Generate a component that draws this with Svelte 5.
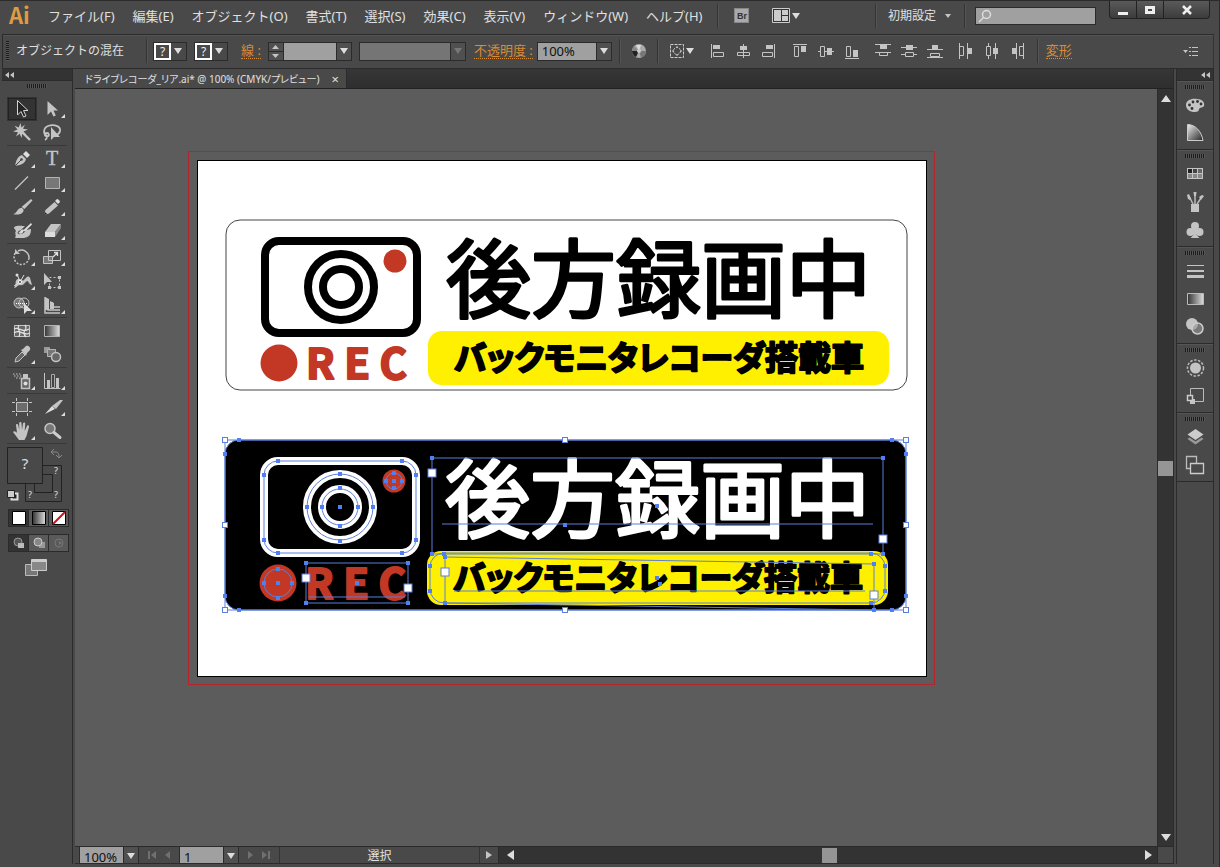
<script lang="ts">
  type Tool = { name: string; icon: string; more?: boolean };

  const menus = [
    'ファイル(F)', '編集(E)', 'オブジェクト(O)', '書式(T)', '選択(S)',
    '効果(C)', '表示(V)', 'ウィンドウ(W)', 'ヘルプ(H)'
  ];

  let activeTool = '選択';
  let strokeWidth = '';
  let brush = '';
  let opacity = '100%';
  let zoom = '100%';
  let page = '1';
  let search = '';

  // 30x24 drawings, grouped the way the panel separates them
  const toolGroups: Tool[][] = [
    [
      { name: '選択', icon: '<path d="M10.5 3.5v14.500l3.500-3.500 2.500 5.500 2.500-1-2.500-5.500h4.500z" fill="#222" stroke="#d4d4d4"/>' },
      { name: 'ダイレクト選択', more: true, icon: '<path d="M10.500 4v14l3.500-3.500 2.500 5 2.300-1-2.300-5h4.500z"/>' },
      { name: '自動選択', icon: '<path d="M13.500 2l1 4.500 3.500-3-2 4.200 5 .8-4.500 2 3 3.500-4.200-1.500-.8 4.500-1.800-4.300-3.700 2.800 2-4.200-5-.8 4.500-2-3-3.700 4.200 1.700z"/><path d="M15 11l8 8" stroke="#c4c4c4" stroke-width="2.400"/>' },
      { name: 'なげなわ', icon: '<path d="M10 15c-4-2-4-8 1-10 6-2 13 0 12 5-.5 2-2 3.500-4 4M10 12c2 0 3 3 0 3.500-3 0-2.500-3.500 0-3.500zM10 15.500c0 2-1 3-2 3.500" fill="none" stroke="#c4c4c4" stroke-width="1.800"/><path d="M14 6v13l3-3h6z"/>' }
    ],
    [
      { name: 'ペン', more: true, icon: '<path d="M8 19c1-5 2-9 7-11l4 4c-1 5-6 6-11 7z"/><path d="M16 7l3-3 4 4-3 3z" fill="#ddd"/><path d="M8 19l6-6" stroke="#444" fill="none"/><circle cx="14.500" cy="12.500" r="1.300" fill="#444"/>' },
      { name: '文字', more: true, icon: '<text x="15" y="18" font-family="Liberation Serif, serif" font-size="20" text-anchor="middle" stroke="#c4c4c4" stroke-width=".4">T</text>' },
      { name: '直線', more: true, icon: '<path d="M8 18.500L21 5.500" stroke="#c4c4c4" stroke-width="1.300"/>' },
      { name: '長方形', more: true, icon: '<path d="M8.500 6.500h14v11h-14z" fill="#777" stroke="#b4b4b4"/>' },
      { name: 'ブラシ', icon: '<path d="M24 4l1.500 1.500-8 8.500-3-2z"/><path d="M6 19c4 0 4-6 8-6 2 0 3.500 2 2 4-2 3-7 3-10 2z"/>' },
      { name: '鉛筆', more: true, icon: '<path d="M7 20l1.500-5 9-8 3.500 3.500-9 8z"/><path d="M18 6l2-2c1.500 0 3 2 3 3l-2 2z" fill="#ddd"/><path d="M7 20l.9-3 2.200 2z" fill="#222"/>' },
      { name: '塗りブラシ', icon: '<path d="M7 8c3-2 9-1 11-1l-4 4c-4 1-5 5 0 4 4-1 5-4 5-4l5-1c0 6-2 8-7 9H8c2-3-1-5 1-7-1-2-2-2-2-4z"/><path d="M24 4l1 1.500-7 7-2-1z" fill="#ddd"/><path d="M17 11c-3-2-4 3-6 3 3 1.500 5 .5 6-3z" fill="#ddd"/>' },
      { name: '消しゴム', more: true, icon: '<path d="M8 13l6-8h10l-6 8z"/><path d="M8 13h10v5H8z" fill="#ddd"/><path d="M18 13l6-8v4l-6 9z" fill="#888"/>' }
    ],
    [
      { name: '回転', more: true, icon: '<path d="M11 6a7.500 7.500 0 0 1 11 7" fill="none" stroke="#c4c4c4" stroke-width="1.500"/><path d="M22 13a7.500 7.500 0 1 1-13-6" fill="none" stroke="#c4c4c4" stroke-width="1.500" stroke-dasharray="2 1.500"/><path d="M8 4v5h5z"/>' },
      { name: '拡大・縮小', more: true, icon: '<path d="M6.500 11.500h9v7h-9z" fill="#777" stroke="#c4c4c4"/><path d="M11.500 5.500h12v10h-12z" fill="none" stroke="#c4c4c4"/><path d="M16 12l4-4M17 7.500h3.500V11" fill="none" stroke="#ddd" stroke-width="1.300"/>' },
      { name: '線幅', more: true, icon: '<path d="M7 19c3-3 0-8 4-9 3-1 3 3 6 1 3-3 4-5 6-2l2 7c-4-1-3-4-5-4-3 2-3 5-7 4-3 0-3 3-6 3z"/><path d="M10 5l3 8 4-7M13 13l-6 4" fill="none" stroke="#ddd"/><circle cx="10" cy="6" r="1.500" fill="#ddd"/><circle cx="13" cy="13" r="1.500" fill="#333" stroke="#fff"/>' },
      { name: '自由変形', icon: '<path d="M7 4v12l3-3h5z"/><path d="M12.500 8.500h10v10h-10z" fill="none" stroke="#c4c4c4" stroke-dasharray="2 2"/><path d="M21 7h3v3h-3zM21 17h3v3h-3zM11 17h3v3h-3z"/>' },
      { name: 'シェイプ形成', more: true, icon: '<circle cx="12" cy="10" r="5" fill="#777" stroke="#c4c4c4"/><circle cx="17" cy="10" r="5" fill="none" stroke="#c4c4c4"/><path d="M9 10.500h11" stroke="#fff" stroke-dasharray="1 1"/><path d="M17 10v11l3-3h5z" fill="#ddd"/>' },
      { name: '遠近グリッド', more: true, icon: '<path d="M8 4v16h15M11 6v11h12M15 9v5h8" fill="none" stroke="#c4c4c4" stroke-width="1.500"/><path d="M8 4l4 2v11H8zM13 8l4 2v6h-4z"/>' }
    ],
    [
      { name: 'メッシュ', icon: '<path d="M7.500 6.500h15v11h-15z" fill="#666" stroke="#c4c4c4"/><path d="M7 10c6-3 7 5 15 0M7 14c7-5 8 4 16 0M12 6c-3 5 3 6 0 12M18 6c4 5-5 6 1 12" fill="none" stroke="#e0e0e0" stroke-width="1.300"/>' },
      { name: 'グラデーション', icon: '<path d="M7.500 6.500h15v11h-15z" fill="url(#fade)" stroke="#b4b4b4"/>' },
      { name: 'スポイト', more: true, icon: '<path d="M8 19l1-4 6-6 3 3-6 6z" fill="#666" stroke="#c4c4c4"/><path d="M14 7l2-1 3-3c2-1 5 1 4 4l-3 3-1 3z"/>' },
      { name: 'ブレンド', icon: '<path d="M7 4h6v6H7z" fill="#999"/><path d="M10.500 6.500h8v7h-8z" fill="#777" stroke="#b4b4b4"/><circle cx="19" cy="14" r="4.500" fill="#666" stroke="#c4c4c4" stroke-width="1.500"/>' }
    ],
    [
      { name: 'シンボルスプレー', more: true, icon: '<path d="M14.500 9.500h8v10h-8z" fill="#666" stroke="#c4c4c4" stroke-width="1.500"/><path d="M16 5h5v4h-5z"/><circle cx="18.500" cy="14.500" r="2" fill="#ddd"/><path d="M6 5h8M7 7h8M9 9h5" stroke="#c4c4c4" stroke-dasharray="1.500 1.500"/>' },
      { name: '棒グラフ', more: true, icon: '<path d="M7.500 4v15.500h16" fill="none" stroke="#c4c4c4"/><path d="M10 11h3v8h-3zM19 9h3v10h-3z"/><path d="M14.500 5.500h3v13h-3z" fill="#444" stroke="#aaa"/>' }
    ],
    [
      { name: 'アートボード', icon: '<path d="M9.500 7.500h11v9h-11z" fill="#6c6c6c" stroke="#c4c4c4"/><path d="M5 7.500h3M22 7.500h3M5 16.500h3M22 16.500h3M9.500 3v3M20.500 3v3M9.500 18v3M20.500 18v3" stroke="#c4c4c4"/>' },
      { name: 'スライス', more: true, icon: '<path d="M15 11l8-6h3l-7 9z"/><path d="M8 19l7-8 3 3z" fill="#ddd"/>' },
      { name: '手のひら', more: true, icon: '<path d="M12 21c-2-3-4-5-6-8 1-1.500 3-.5 4 1L9 6c0-1.500 2-1.500 2.200 0l1 5V4c0-1.500 2.200-1.500 2.300 0l.5 7 1-6.500c.3-1.400 2.300-1.200 2.200.3L17.700 12l2.300-5c.7-1.300 2.400-.5 2 1l-2.500 9-2 4z"/>' },
      { name: 'ズーム', icon: '<circle cx="13" cy="9.500" r="5" fill="#777" stroke="#c4c4c4" stroke-width="1.500"/><path d="M17 13.500l6 5" stroke="#ccc" stroke-width="3" stroke-linecap="round"/>' }
    ]
  ];

  // 16x16
  const alignGroups = [
    [
      { name: '水平方向左に整列', icon: '<path d="M2 1h1v14H2zM4 2h7v4H4z"/><path d="M4.500 9.500h10v4h-10z" class="o"/>' },
      { name: '水平方向中央に整列', icon: '<path d="M8 1h1v14H8zM5 3h7v4H5z"/><path d="M2.500 9.500h12v3h-12z" class="o"/>' },
      { name: '水平方向右に整列', icon: '<path d="M13 1h1v14h-1zM5 2h7v4H5z"/><path d="M1.500 9.500h10v4h-10z" class="o"/>' }
    ],
    [
      { name: '垂直方向上に整列', icon: '<path d="M1 1h14v1H1zM9 3h5v6H9z"/><path d="M2.500 3.500h4v10h-4z" class="o"/>' },
      { name: '垂直方向中央に整列', icon: '<path d="M0 8h16v1H0zM9 5h5v7H9z"/><path d="M2.500 3.500h4v10h-4z" fill="#494949" class="o"/>' },
      { name: '垂直方向下に整列', icon: '<path d="M1 15h14v1H1zM9 7h5v7H9z"/><path d="M2.500 3.500h4v10h-4z" class="o"/>' }
    ],
    [
      { name: '上端を分布', icon: '<path d="M0 1h16v1H0zM5 2h7v4H5zM0 9h16v1H0z"/><path d="M4.500 9.500h8v3h-8z" class="o"/>' },
      { name: '中央を垂直に分布', icon: '<path d="M0 4h16v1H0zM5 2h7v5H5zM0 11h16v1H0z"/><path d="M4.500 9.500h8v4h-8z" fill="#494949" class="o"/>' },
      { name: '下端を分布', icon: '<path d="M0 6h16v1H0zM5 2h6v4H5zM0 14h16v1H0z"/><path d="M3.500 10.500h9v3h-9z" class="o"/>' }
    ],
    [
      { name: '左端を分布', icon: '<path d="M1 0h1v16H1zM9 0h1v16H9zM10 5h4v6h-4z"/><path d="M1.500 3.500h4v9h-4z" class="o"/>' },
      { name: '中央を水平に分布', icon: '<path d="M4 0h1v16H4zM11 0h1v16h-1zM9 5h5v6H9z"/><path d="M2.500 3.500h4v9h-4z" fill="#494949" class="o"/>' },
      { name: '右端を分布', icon: '<path d="M6 0h1v16H6zM13 0h1v16h-1zM2 5h4v6H2z"/><path d="M9.500 3.500h4v9h-4z" class="o"/>' }
    ]
  ];

  // 20x20
  const dockGroups = [
    [
      { name: 'カラー', icon: '<path d="M1 10c0-5 6-7 11-6 6 0 8 4 7 7-1 2-4 1-5 3 0 3-3 3-6 3-5-1-7-4-7-7z"/><circle cx="4.500" cy="10" r="1.400" fill="#333"/><circle cx="7" cy="13.500" r="1.400" fill="#333"/><circle cx="8" cy="7" r="1.400" fill="#333"/><circle cx="12.500" cy="6.500" r="1.400" fill="#333"/><circle cx="16" cy="9" r="1.400" fill="#333"/>' },
      { name: 'カラーガイド', icon: '<path d="M2.500 1.500c8 0 14 7 15.500 16H2.500z" fill="url(#fan)" stroke="#ccc"/>' }
    ],
    [
      { name: 'スウォッチ', icon: '<path d="M2 4h16v11H2z"/><path d="M3 5h4v4H3z" fill="#222"/><path d="M8 5h4v4H8z" fill="#444"/><path d="M13 5h4v4h-4z" fill="#666"/><path d="M3 10h4v4H3zM8 10h4v4H8zM13 10h4v4h-4z" fill="#888"/>' },
      { name: 'ブラシ', icon: '<path d="M6 12h8v8H6z"/><path d="M8 12L4 4M10 12V2M12 12l4-6" stroke="#bbb" stroke-width="1.500"/><path d="M2 3l2-1 2 5-1 1-2-1zM8.500 0h3l-.5 4H9zM14 5l3-2 2 1-3 4z"/>' },
      { name: 'シンボル', icon: '<circle cx="10" cy="6" r="4"/><circle cx="5.500" cy="12" r="4"/><circle cx="14.500" cy="12" r="4"/><path d="M9 8h2l.5 7 3 3h-9l3-3z"/>' }
    ],
    [
      { name: '線', icon: '<path d="M2 4h17v1H2zM2 9h17v2H2zM2 14h17v3H2z"/>' },
      { name: 'グラデーション', icon: '<path d="M2.500 4.500h16v11h-16z" fill="url(#fade)" stroke="#bbb"/>' },
      { name: '透明', icon: '<circle cx="7" cy="7" r="6"/><circle cx="12.500" cy="11.500" r="5.500" fill="#999" fill-opacity=".6" stroke="#ccc" stroke-width="1.500"/>' }
    ],
    [
      { name: 'アピアランス', icon: '<circle cx="10.500" cy="10" r="5.500"/><circle cx="10.500" cy="10" r="8" fill="none" stroke="#bbb" stroke-width="1.500" stroke-dasharray="2.500 1.500"/>' },
      { name: 'グラフィックスタイル', icon: '<path d="M5.500 9V2.500h13v13H10" fill="none" stroke="#bbb"/><path d="M5 13h5v5H5z"/><path d="M2.500 9.500h5v5h-5z" fill="#494949" stroke="#ccc" stroke-width="1.500"/>' }
    ],
    [
      { name: 'レイヤー', icon: '<path d="M10.500 2l8 5.500-8 5.500-8-5.500z" fill="#ccc"/><path d="M2.500 12l2-1.500 6 4 6-4 2 1.500-8 5.500z" fill="#999"/>' },
      { name: 'アートボード', icon: '<path d="M5 13.500H1.500v-12h10V8" fill="none" stroke="#bbb" stroke-width="1.300"/><path d="M5.500 8.500h13v10h-13z" fill="#494949" stroke="#ccc" stroke-width="1.300"/>' }
    ]
  ];

  // anchor points of the selected paths
  const anchors = [
    [14, 0], [0, 14], [0, 156], [14, 170], [667, 0], [681, 14], [681, 156], [667, 170],
    [53, 21], [177, 21], [39, 35], [191, 35], [39, 100], [191, 100], [53, 113], [177, 113],
    [115, 34], [82, 67], [148, 67], [115, 101], [115, 48], [97, 67], [133, 67], [115, 86], [115, 67],
    [169, 33], [161, 41], [177, 41], [169, 48], [169, 41],
    [53, 129], [39, 143], [67, 143], [53, 158], [53, 143],
    [81, 123], [183, 123], [81, 163], [183, 163], [132, 143],
    [207, 18], [658, 18], [207, 114], [658, 114], [340, 85], [432, 66],
    [219, 114], [205, 126], [205, 151], [220, 163], [646, 114], [660, 126], [660, 151], [646, 163],
    [220, 117], [649, 124], [649, 170], [432, 138], [435, 144]
  ];
  const corners = [[0, 0], [340, 0], [681, 0], [0, 85], [681, 85], [0, 170], [340, 170], [681, 170]];
  const ports = [[81, 138], [183, 148], [207, 33], [658, 99], [220, 132], [649, 155]];
</script>

{#snippet arrow()}
  <svg class="arrow" width="8" height="6" viewBox="0 0 8 6"><path d="M0 0h8L4 6z" /></svg>
{/snippet}

{#snippet sticker(ink: string, paper: string, line: string)}
  <rect width="681" height="170" rx="14" fill={paper} stroke={line} />
  <g fill="none" stroke={ink} stroke-width="8">
    <rect x="39" y="21" width="152" height="92" rx="14" />
    <circle cx="115" cy="67" r="33" />
    <circle cx="115" cy="67" r="18" />
  </g>
  <circle cx="169" cy="41" r="11.500" fill="#c23824" />
  <circle cx="53" cy="143" r="18.500" fill="#c23824" />
  <text class="rec" x="80" y="159">R E C</text>
  <rect x="202" y="111" width="461" height="54" rx="14" fill="#fff000" />
  <text class="headline" x="220" y="91" fill={ink} stroke={ink}>後方録画中</text>
  <text class="subline" x="228" y="150">バックモニタレコーダ搭載車</text>
{/snippet}

<svg class="defs" width="0" height="0" aria-hidden="true">
  <defs>
    <linearGradient id="fade"><stop stop-color="#333" /><stop offset="1" stop-color="#ddd" /></linearGradient>
    <linearGradient id="fan" y2="1"><stop stop-color="#eee" /><stop offset="1" stop-color="#222" /></linearGradient>
  </defs>
</svg>

<div class="app">
  <header class="menubar">
    <span class="logo">Ai</span>
    <nav class="menus">
      {#each menus as menu}
        <button>{menu}</button>
      {/each}
    </nav>
    <span class="rule menu-rule"></span>
    <button class="bridge" aria-label="Bridge">Br</button>
    <button class="arrange" aria-label="ドキュメントレイアウト">
      <svg width="18" height="15" viewBox="0 0 18 15"><path d="M.5.500h17v14H.5z" fill="#333" stroke="#ccc" /><path d="M2 2h7v11H2zM10 2h6v5h-6zM10 8h6v5h-6z" fill="#ccc" /></svg>
      {@render arrow()}
    </button>
    <div class="menubar-right">
      <span class="rule"></span>
      <label class="workspace">
        <select aria-label="ワークスペース"><option>初期設定</option></select>
        <svg width="6" height="4" viewBox="0 0 6 4"><path d="M0 0h6L3 4z" /></svg>
      </label>
      <span class="rule"></span>
      <label class="search">
        <svg width="14" height="14" viewBox="0 0 14 14"><circle cx="8.500" cy="5.500" r="4" /><path d="M5.500 8.500L1 13" /></svg>
        <input type="text" aria-label="検索" bind:value={search} />
      </label>
      <div class="window-buttons">
        <button aria-label="最小化"><svg width="12" height="12"><path d="M1 8h10v3H1z" /></svg></button>
        <button aria-label="最大化"><svg width="12" height="12"><path d="M1 2h10v8H1zM4 5v2h4V5z" fill-rule="evenodd" /></svg></button>
        <button class="close" aria-label="閉じる"><svg width="12" height="12"><path d="M2 2l8 8M10 2l-8 8" stroke="#eee" stroke-width="2.500" /></svg></button>
      </div>
    </div>
  </header>

  <section class="control">
    <span class="grip-v"></span>
    <span class="target">オブジェクトの混在</span>
    <span class="rule"></span>
    <button class="swatch" aria-label="塗り"><span>?</span>{@render arrow()}</button>
    <button class="swatch" aria-label="線の色"><span>?</span>{@render arrow()}</button>
    <label class="link stroke-label" for="stroke">線 :</label>
    <div class="combo">
      <button class="stepper" aria-label="線幅を変更">
        <svg width="15" height="17" viewBox="0 0 15 17"><path d="M4 6h7L7.500 2zM4 11h7l-3.500 4z" /><path d="M0 8h15v1H0z" fill="#2b2b2b" /></svg>
      </button>
      <input id="stroke" class="w52" bind:value={strokeWidth} />
      <button aria-label="線幅の一覧">{@render arrow()}</button>
    </div>
    <div class="combo off">
      <input class="w90" aria-label="ブラシ定義" bind:value={brush} disabled />
      <button aria-label="ブラシ一覧" disabled>{@render arrow()}</button>
    </div>
    <label class="link opacity-label" for="opacity">不透明度 :</label>
    <div class="combo">
      <input id="opacity" class="w58" bind:value={opacity} />
      <button aria-label="不透明度の一覧">{@render arrow()}</button>
    </div>
    <span class="rule"></span>
    <button class="recolor" aria-label="オブジェクトを再配色">
      <svg width="16" height="16" viewBox="0 0 16 16"><circle cx="8" cy="8" r="7" fill="#aaa" /><path d="M8 8L3 3a7 7 0 0 0-2 5z" fill="#888" /><path d="M8 8H1a7 7 0 0 0 4 6z" fill="#222" /><path d="M8 8l-3-6h5z" fill="#ddd" /><path d="M8 8l7 0a7 7 0 0 1-5 6.500z" fill="#777" /><circle cx="8" cy="8" r="2" fill="#ccc" /></svg>
    </button>
    <span class="rule"></span>
    <button class="align-to" aria-label="整列の基準">
      <svg width="14" height="14" viewBox="0 0 14 14"><path d="M.5.500h13v13H.5z" fill="none" stroke="#ccc" stroke-dasharray="3 1" /><circle cx="7" cy="7" r="3.500" fill="none" stroke="#ccc" stroke-dasharray="2 1" /><path d="M7 2v2M7 10v2M2 7h2M10 7h2" stroke="#ccc" /></svg>
      {@render arrow()}
    </button>
    <div class="aligns">
      {#each alignGroups as group}
        <div class="align-group">
          {#each group as item}
            <button aria-label={item.name}><svg width="16" height="16" viewBox="0 0 16 16">{@html item.icon}</svg></button>
          {/each}
        </div>
      {/each}
    </div>
    <span class="rule"></span>
    <a class="link transform" href="#transform">変形</a>
    <button class="flyout" aria-label="パネルメニュー">
      <svg width="15" height="9" viewBox="0 0 15 9"><path d="M0 3h5L2.500 6zM6 0h2v1H6zM6 4h2v1H6zM6 8h2v1H6zM9 0h6v1H9zM9 4h6v1H9zM9 8h6v1H9z" /></svg>
    </button>
  </section>

  <div class="workarea">
    <aside class="toolbox">
      <button class="collapse" aria-label="パネルを折りたたむ"><svg width="9" height="6" viewBox="0 0 9 6"><path d="M4 0v6L0 3zM9 0v6L5 3z" /></svg></button>
      <span class="grip"></span>
      {#each toolGroups as group}
        <div class="tool-group">
          {#each group as tool}
            <button
              class="tool"
              class:active={tool.name === activeTool}
              aria-label={tool.name}
              on:click={() => (activeTool = tool.name)}
            >
              <svg width="30" height="24" viewBox="0 0 30 24">
                {@html tool.icon}
                {#if tool.more}<path d="M28 17v4h-4z" fill="#ddd" />{/if}
              </svg>
            </button>
          {/each}
        </div>
      {/each}
      <svg class="fill-stroke" width="60" height="56" viewBox="0 0 60 56">
        <path d="M18.500 18.500h36v36h-36zM27.500 27.500h18v18h-18z" fill="none" stroke="#222" />
        <path d="M.5.500h35v36H.5z" fill="#494949" stroke="#222" />
        <text x="18" y="22" font-size="15">?</text>
        <text x="49" y="27">?</text>
        <text x="23" y="51">?</text>
        <text x="49" y="51">?</text>
        <path d="M45 5h4q3 0 3 5M47 2l-3 3 3 3M49 8l3 3 3-3" fill="none" stroke="#888" />
        <path d="M4.500 46.500h6v6h-6z" fill="#222" stroke="#ddd" stroke-width="2" /><path d="M.5 43.500h7v7h-7z" fill="#ccc" stroke="#222" />
      </svg>
      <div class="modes">
        <button class="on" aria-label="カラー"><svg width="14" height="14"><path d="M.5.500h13v13H.5z" fill="#fff" stroke="#000" /></svg></button>
        <button aria-label="グラデーション"><svg width="14" height="14"><path d="M.5.500h13v13H.5z" fill="url(#fade)" stroke="#000" /></svg></button>
        <button aria-label="なし"><svg width="14" height="14"><path d="M.5.500h13v13H.5z" fill="#fff" stroke="#000" /><path d="M1 13L13 1" stroke="#d0111b" stroke-width="2" /></svg></button>
      </div>
      <div class="modes draw">
        <button class="on" aria-label="標準描画"><svg width="14" height="14"><circle cx="6" cy="6" r="4" fill="#555" stroke="#999" /><path d="M6 7h6v5H6z" fill="#bbb" /></svg></button>
        <button aria-label="背面描画"><svg width="14" height="14"><path d="M7 6h6v6H7z" fill="#999" /><circle cx="6" cy="6" r="4" fill="#888" stroke="#ccc" /></svg></button>
        <button aria-label="内側描画"><svg width="14" height="14"><circle cx="7" cy="7" r="4" fill="none" stroke="#777" /><path d="M7 5l3 2-3 2z" fill="#777" /></svg></button>
      </div>
      <button class="screen-mode" aria-label="スクリーンモード">
        <svg width="22" height="17" viewBox="0 0 22 17"><path d="M.5 5.500h12v11H.5z" fill="#777" stroke="#bbb" /><path d="M6.500.500h15v11h-15z" fill="#888" stroke="#ccc" /><path d="M7 1h14v2H7z" fill="#ccc" /></svg>
      </button>
    </aside>

    <main class="document">
      <div class="tabs">
        <div class="tab">
          <span>ドライブレコーダ_リア.ai* @ 100% (CMYK/プレビュー)</span>
          <button aria-label="タブを閉じる">×</button>
        </div>
      </div>
      <div class="view">
        <div class="canvas">
          <svg class="artwork" width="747" height="534" viewBox="0 0 747 534">
            <rect x=".5" y=".5" width="746" height="533" fill="none" stroke="#b5262c" />
            <rect x="9.500" y="9.500" width="729" height="516" fill="#fff" stroke="#000" />
            <g transform="translate(38 69)">{@render sticker('#000', '#fff', '#444')}</g>
            <g transform="translate(37 289)">
              {@render sticker('#fff', '#000', 'none')}
              <g class="outline">
                <rect width="681" height="170" />
                <rect width="681" height="170" rx="14" />
                <rect x="39" y="21" width="152" height="92" rx="14" />
                <circle cx="115" cy="67" r="33" />
                <circle cx="115" cy="67" r="18" />
                <circle cx="169" cy="41" r="8" />
                <circle cx="53" cy="143" r="14" />
                <rect x="81" y="123" width="102" height="40" />
                <path d="M84 157h96" />
                <rect x="207" y="18" width="451" height="96" />
                <path d="M217 84h431" />
                <rect x="205" y="113" width="455" height="50" rx="14" />
                <path d="M220 117L649 124v46L220 163zM229 151h411" />
              </g>
              {#each anchors as [x, y]}
                <rect class="anchor" x={x - 2} y={y - 2} width="4" height="4" />
              {/each}
              {#each corners as [x, y]}
                <rect class="handle" x={x - 2.5} y={y - 2.5} width="5" height="5" />
              {/each}
              {#each ports as [x, y]}
                <rect class="handle" x={x - 4} y={y - 4} width="8" height="8" />
              {/each}
            </g>
          </svg>
        </div>
        <div class="scroll-v">
          <svg width="10" height="7"><path d="M0 7h10L5 0z" /></svg>
          <span class="thumb"></span>
          <svg width="10" height="7"><path d="M0 0h10L5 7z" /></svg>
        </div>
      </div>
      <footer class="status">
        <div class="combo">
          <input class="w43" aria-label="ズーム" bind:value={zoom} />
          <button aria-label="ズームの一覧">{@render arrow()}</button>
        </div>
        <div class="pager">
          <button aria-label="最初"><svg width="9" height="8"><path d="M0 0h2v8H0zM8 0v8L3 4z" /></svg></button>
          <button aria-label="前へ"><svg width="5" height="8"><path d="M5 0v8L0 4z" /></svg></button>
        </div>
        <div class="combo">
          <input class="w43" aria-label="アートボード" bind:value={page} />
          <button aria-label="アートボードの一覧">{@render arrow()}</button>
        </div>
        <div class="pager">
          <button aria-label="次へ"><svg width="5" height="8"><path d="M0 0v8l5-4z" /></svg></button>
          <button aria-label="最後"><svg width="9" height="8"><path d="M7 0h2v8H7zM1 0v8l5-4z" /></svg></button>
        </div>
        <div class="current-tool">選択</div>
        <button class="status-more" aria-label="表示項目"><svg width="6" height="8"><path d="M0 0v8l6-4z" /></svg></button>
        <div class="scroll-h">
          <svg width="7" height="10"><path d="M7 0v10L0 5z" /></svg>
          <span class="thumb"></span>
          <svg width="7" height="10"><path d="M0 0v10l7-5z" /></svg>
        </div>
        <span class="size-grip"></span>
      </footer>
    </main>

    <aside class="dock">
      <button class="collapse" aria-label="パネルを展開"><svg width="9" height="6" viewBox="0 0 9 6"><path d="M4 0v6L0 3zM9 0v6L5 3z" /></svg></button>
      {#each dockGroups as group}
        <div class="dock-group">
          <span class="grip"></span>
          {#each group as panel}
            <button aria-label={panel.name}><svg width="20" height="20" viewBox="0 0 20 20">{@html panel.icon}</svg></button>
          {/each}
        </div>
      {/each}
    </aside>
  </div>
</div>

<style>
  :global(body) {
    background: #494949;
  }

  .app {
    display: flex;
    flex-direction: column;
    height: 100vh;
    box-sizing: border-box;
    padding: 0 5px 3px 2px;
    border-top: 1px solid #2b2b2b;
    border-right: 1px solid #2b2b2b;
    overflow: hidden;
    background: #494949;
    color: #e0e0e0;
    font-family: 'Noto Sans', 'Noto Sans CJK JP', sans-serif;
    font-size: 13px;
    line-height: 16px;
  }

  .defs {
    position: absolute;
  }

  button,
  input,
  select {
    margin: 0;
    padding: 0;
    border: none;
    border-radius: 0;
    background: none;
    color: inherit;
    font: inherit;
  }

  button {
    display: flex;
    align-items: center;
    justify-content: center;
    flex: none;
  }

  svg {
    display: block;
    flex: none;
    fill: #c4c4c4;
  }

  svg :global(.o) {
    stroke: #c4c4c4;
  }

  svg :global(.o:not([fill])) {
    fill: none;
  }

  .arrow {
    fill: #ddd;
  }

  .rule {
    flex: none;
    width: 1px;
    height: 24px;
    background: #333;
    border-right: 1px solid #555;
  }

  /* Menu bar */
  .menubar {
    display: flex;
    align-items: center;
    height: 29px;
    padding-bottom: 4px;
    flex: none;
  }

  .logo {
    width: 46px;
    box-sizing: border-box;
    padding: 0 0 3px 7px;
    color: #dd9c42;
    font: bold 22px/25px 'Noto Sans CJK JP', sans-serif;
  }

  .menus {
    display: flex;
    gap: 18px;
    white-space: nowrap;
  }

  .menu-rule {
    margin: 0 15px;
  }

  .bridge {
    width: 15px;
    height: 15px;
    background: #aaa;
    border: 1px solid #888;
    box-sizing: border-box;
    color: #333;
    font: bold 9px/12px 'Liberation Sans', sans-serif;
  }

  .arrange {
    gap: 2px;
    margin-left: 23px;
  }

  .menubar-right {
    display: flex;
    align-items: center;
    margin-left: auto;
    align-self: stretch;
  }

  .workspace {
    display: flex;
    align-items: center;
    gap: 8px;
    margin: 0 13px 0 11px;
  }

  .workspace select {
    width: 49px;
    appearance: none;
    font-size: 12px;
  }

  .search {
    display: flex;
    align-items: center;
    width: 119px;
    height: 16px;
    margin: 0 13px 0 9px;
    border: 1px solid #2b2b2b;
    background: #a0a0a0;
  }

  .search svg {
    margin-left: 2px;
    fill: none;
    stroke: #ddd;
    stroke-width: 1.500;
  }

  .search input {
    flex: 1;
    min-width: 0;
  }

  .window-buttons {
    display: flex;
    align-self: flex-start;
    height: 17px;
    margin-right: 4px;
    border: 1px solid #222;
    border-top: none;
    border-radius: 0 0 4px 4px;
    background: linear-gradient(#5a5a5a, #3c3c3c);
  }

  .window-buttons button {
    width: 27px;
    border-right: 1px solid #222;
  }

  .window-buttons svg {
    fill: #eee;
  }

  .window-buttons .close {
    width: 45px;
    border-right: none;
  }

  /* Control bar */
  .control {
    display: flex;
    align-items: center;
    height: 32px;
    padding-bottom: 1px;
    flex: none;
    border: 1px solid #2b2b2b;
    border-right-color: #333;
    box-shadow: inset 0 1px #555;
    white-space: nowrap;
  }

  .grip-v {
    flex: none;
    width: 3px;
    height: 20px;
    margin: 0 7px 0 3px;
    background: repeating-linear-gradient(#1c1c1c 0 1px, #555 1px 2px);
  }

  .target {
    width: 130px;
    font-size: 12px;
  }

  .swatch {
    margin-left: 5px;
    height: 19px;
    border: 1px solid #2b2b2b;
  }

  .swatch span {
    width: 13px;
    height: 13px;
    margin: 0 3px 0 0;
    border: 2px solid #fff;
    color: #eee;
    font-size: 12px;
    line-height: 13px;
  }

  .swatch .arrow {
    margin-right: 4px;
  }

  .swatch + .swatch {
    margin-left: 7px;
  }

  .link {
    border-bottom: 1px dotted #d98b35;
    color: #d98b35;
    line-height: 15px;
    text-decoration: none;
  }

  .stroke-label {
    margin: 0 7px 0 13px;
  }

  .opacity-label {
    margin: 0 4px 0 8px;
  }

  .combo {
    display: flex;
    height: 17px;
    border: 1px solid #2b2b2b;
  }

  .combo input {
    box-sizing: border-box;
    padding-left: 4px;
    background: #a0a0a0;
    color: #111;
  }

  .combo button {
    width: 15px;
    border-left: 1px solid #2b2b2b;
    box-sizing: border-box;
    background: #505050;
  }

  .combo .stepper {
    border-right: 1px solid #2b2b2b;
    border-left: none;
  }

  .off {
    margin-left: 7px;
  }

  .off input {
    background: #757575;
  }

  .off .arrow {
    fill: #777;
  }

  .w52 {
    width: 52px;
  }

  .w90 {
    width: 90px;
  }

  .w58 {
    width: 58px;
  }

  .w43 {
    width: 43px;
  }

  .combo + .rule {
    margin-left: 7px;
  }

  .recolor {
    margin: 0 10px;
  }

  .align-to {
    gap: 2px;
    margin: 0 15px 0 11px;
  }

  .aligns {
    display: flex;
    gap: 15px;
    margin-right: 11px;
  }

  .align-group {
    display: flex;
    gap: 10px;
  }

  .transform {
    margin-left: 7px;
  }

  .flyout {
    margin: 0 15px 0 auto;
  }

  /* Panels */
  .workarea {
    display: flex;
    flex: 1;
    min-height: 0;
  }

  .toolbox,
  .dock {
    display: flex;
    flex-direction: column;
    flex: none;
    box-sizing: border-box;
    background: #494949;
    border-right: 1px solid #2b2b2b;
  }

  .toolbox {
    width: 71px;
    margin-right: 2px;
    border-left: none;
  }

  .collapse {
    height: 12px;
    padding: 0 3px;
    justify-content: flex-start;
    background: #333;
    border-bottom: 1px solid #2b2b2b;
    box-sizing: border-box;
  }

  .dock .collapse {
    justify-content: flex-end;
  }

  .grip {
    align-self: center;
    flex: none;
    width: 20px;
    height: 4px;
    background: repeating-linear-gradient(90deg, #1c1c1c 0 1px, #555 1px 2px);
  }

  .toolbox .grip {
    margin: 3px 0 9px;
  }

  .tool-group {
    display: grid;
    grid-template-columns: 30px 30px;
    margin-left: 5px;
    border-bottom: 1px solid #383838;
    margin-bottom: 1px;
    width: 60px;
  }

  .tool.active {
    background: #333;
    outline: 1px solid #222;
    outline-offset: -2px;
  }

  .fill-stroke {
    margin: 2px 0 0 5px;
    fill: #e0e0e0;
    font-size: 9px;
    text-anchor: middle;
  }

  .modes {
    display: flex;
    align-self: flex-start;
    margin: 6px 0 0 6px;
    border: 1px solid #2b2b2b;
  }

  .modes button {
    width: 19px;
    height: 16px;
    background: #5a5a5a;
  }

  .modes button + button {
    border-left: 1px solid #2b2b2b;
    width: 20px;
  }

  .modes .on {
    background: #333;
  }

  .draw {
    margin-top: 7px;
  }

  .screen-mode {
    align-self: flex-start;
    margin: 7px 0 0 23px;
  }

  .dock {
    width: 38px;
    border-left: 1px solid #2b2b2b;
  }

  .dock-group {
    display: flex;
    flex-direction: column;
    padding: 4px 0 2px;
    border-bottom: 1px solid #2b2b2b;
    box-shadow: inset 0 1px #555;
  }

  .dock-group button {
    height: 28px;
  }

  .dock-group .grip {
    margin-bottom: 2px;
  }

  /* Document window */
  .document {
    display: flex;
    flex-direction: column;
    flex: 1;
    min-width: 0;
    margin-right: 2px;
    border: 0 solid #2b2b2b;
    border-right-width: 1px;
  }

  .tabs {
    display: flex;
    flex: none;
    height: 19px;
    background: linear-gradient(#363636, #2e2e2e);
    border-bottom: 1px solid #222;
  }

  .tab {
    display: flex;
    align-items: center;
    gap: 12px;
    padding: 0 7px 0 10px;
    border-right: 1px solid #2b2b2b;
    background: #494949;
    font-size: 10px;
    font-feature-settings: 'palt';
    white-space: nowrap;
  }

  .tab button {
    font-size: 13px;
  }

  .view {
    display: flex;
    flex: 1;
    min-height: 0;
  }

  .canvas {
    flex: 1;
    min-width: 0;
    padding: 62px 0 0 113px;
    overflow: hidden;
    background: #5c5c5c;
  }

  .artwork {
    font-family: 'Noto Sans CJK JP', sans-serif;
  }

  .rec {
    fill: #c23824;
    stroke: #c23824;
    stroke-width: 2;
    stroke-linejoin: round;
    font-size: 42px;
    font-weight: bold;
  }

  .headline {
    stroke-width: 3;
    stroke-linejoin: round;
    font-size: 85px;
  }

  .subline {
    fill: #000;
    stroke: #000;
    stroke-width: 2;
    stroke-linejoin: round;
    font-size: 33px;
    font-weight: bold;
    font-feature-settings: 'palt';
  }

  .outline {
    fill: none;
    stroke: #5b7fdc;
  }

  .anchor {
    fill: #4f7ff0;
  }

  .handle {
    fill: #fff;
    stroke: #5b7fdc;
  }

  .scroll-v {
    display: flex;
    flex-direction: column;
    align-items: center;
    justify-content: space-between;
    width: 15px;
    padding: 6px 0 5px;
    border-left: 1px solid #2b2b2b;
    background: #333;
  }

  .scroll-v svg,
  .scroll-h svg {
    fill: #ddd;
  }

  .thumb {
    width: 15px;
    height: 15px;
    background: #959595;
  }

  .status {
    display: flex;
    flex: none;
    height: 16px;
    padding-left: 4px;
    border: solid #2b2b2b;
    border-width: 1px 0;
    overflow: hidden;
  }

  .status .combo {
    border-width: 0 1px;
  }

  .status input {
    padding-top: 3px;
  }

  .pager {
    display: flex;
    align-items: center;
    justify-content: space-between;
    width: 22px;
    padding: 0 9px;
  }

  .pager svg {
    fill: #707070;
  }

  .current-tool {
    width: 199px;
    padding-top: 1px;
    border: solid #333;
    border-width: 0 1px;
    font-size: 12px;
    text-align: center;
  }

  .status-more {
    width: 18px;
  }

  .scroll-h {
    display: flex;
    flex: 1;
    align-items: center;
    justify-content: space-between;
    padding: 0 5px 0 8px;
    border: solid #2b2b2b;
    border-width: 0 1px;
    background: #333;
  }

  .size-grip {
    width: 15px;
  }
</style>
